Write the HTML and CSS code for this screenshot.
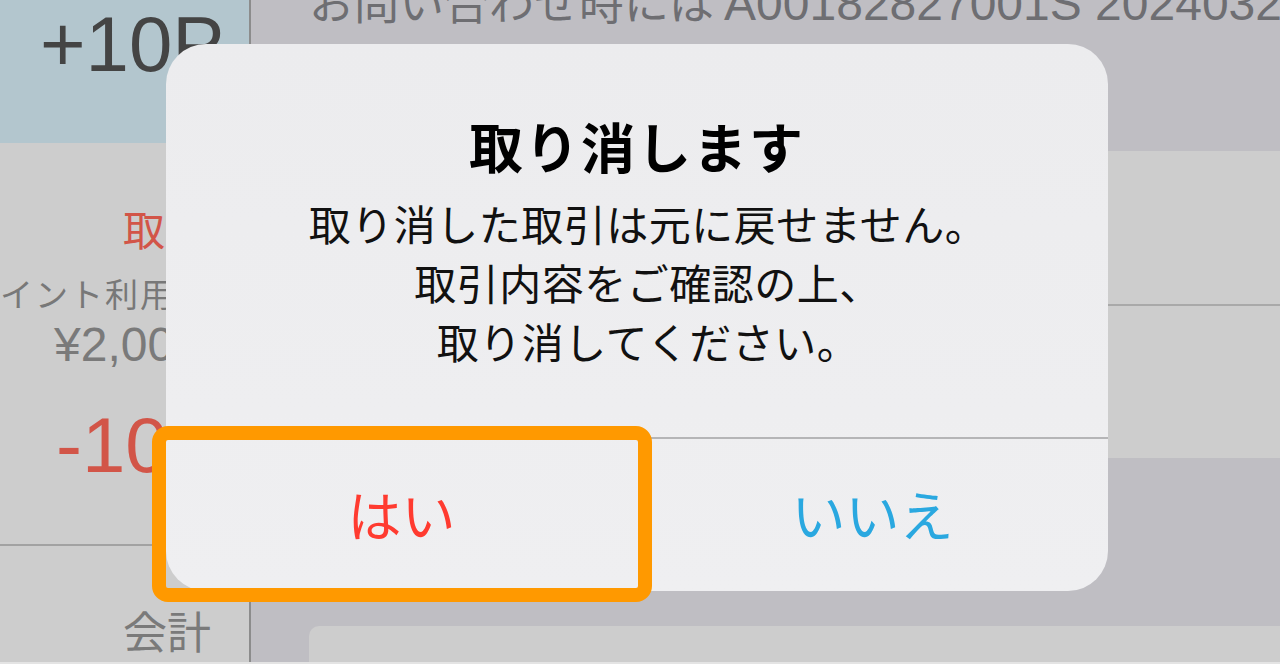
FILE: index.html
```html
<!DOCTYPE html>
<html lang="ja">
<head>
    <meta charset="UTF-8">
    <meta name="viewport" content="width=device-width, initial-scale=1.0">
    <title>取引詳細</title>
    <link rel="stylesheet" href="styles.css">
</head>
<body>
    <div class="screen">
        <aside class="side">
            <div class="side-top">
                <p class="point-plus">+10P</p>
            </div>
            <div class="side-detail">
                <p class="status">取消済み</p>
                <p class="caption">ポイント利用額</p>
                <p class="amount">¥2,000</p>
                <p class="point-minus">-10P</p>
            </div>
            <div class="side-total">
                <p class="total-label">会計</p>
            </div>
        </aside>
        <main class="content">
            <p class="inquiry">お問い合わせ時には <span class="inquiry-code">A00182827001S 20240321</span></p>
            <section class="card card-detail">
                <div class="card-row"></div>
                <div class="card-row"></div>
            </section>
            <section class="card card-bottom"></section>
        </main>
    </div>
    <div class="bottom-edge"></div>

    <div class="dialog">
        <h1 class="dialog-title">取り消します</h1>
        <p class="dialog-message">取り消した取引は元に戻せません。<br>取引内容をご確認の上、<br>取り消してください。</p>
        <div class="dialog-actions">
            <button class="dialog-btn btn-yes">はい</button>
            <button class="dialog-btn btn-no">いいえ</button>
        </div>
    </div>
    <div class="highlight"></div>
</body>
</html>
```

FILE: styles.css
```css
body {
    margin: 0;
    width: 1280px;
    height: 664px;
    overflow: hidden;
    font-family: "Noto Sans CJK JP", sans-serif;
    background: #bfbec3;
}

p {
    margin: 0;
}

.screen {
    display: flex;
    height: 662px;
    overflow: hidden;
}

/* left column */
.side {
    width: 249px;
    flex-shrink: 0;
    border-right: 2px solid #8c8c8c;
    background: #cdcdcd;
    overflow: hidden;
    white-space: nowrap;
}

.side-top {
    height: 143px;
    background: #b3c6ce;
}

.point-plus {
    padding-left: 40px;
    font-family: "Liberation Sans", sans-serif;
    font-size: 78px;
    line-height: 88px;
    color: #444444;
}

.side-detail {
    display: flow-root;
    height: 401px;
    border-bottom: 2px solid #a2a2a2;
}

.status {
    margin-top: 60px;
    padding-left: 123px;
    font-size: 42px;
    line-height: 50px;
    color: #d25548;
}

.caption {
    margin-top: 22px;
    margin-left: -35px;
    font-size: 33px;
    letter-spacing: 2px;
    line-height: 36px;
    color: #787878;
}

.amount {
    margin-top: 6px;
    padding-left: 54px;
    font-family: "Liberation Sans", sans-serif;
    font-size: 48px;
    line-height: 56px;
    color: #7a7a7a;
}

.point-minus {
    margin-top: 27px;
    padding-left: 56px;
    font-family: "Liberation Sans", sans-serif;
    font-size: 78px;
    line-height: 90px;
    color: #d25548;
}

.side-total {
    height: 116px;
}

.total-label {
    padding-top: 54px;
    padding-left: 123px;
    font-size: 44px;
    line-height: 60px;
    color: #7a7a7a;
}

/* right content */
.content {
    flex: 1;
    padding-left: 58px;
    background: #bfbec3;
}

.inquiry {
    margin-top: -29px;
    font-size: 45px;
    line-height: 60px;
    color: #6e6e72;
    white-space: nowrap;
}

.inquiry-code {
    font-family: "Liberation Sans", sans-serif;
    font-size: 48px;
}

.card {
    background: #cdcdcd;
    border-radius: 10px 0 0 10px;
}

.card-detail {
    margin-top: 117px;
}

.card-row {
    height: 153px;
}

.card-row + .card-row {
    height: 152px;
    border-top: 2px solid #a9a9a9;
}

.card-bottom {
    margin-top: 168px;
    height: 60px;
}

.bottom-edge {
    height: 2px;
    background: #e4e4e4;
}

/* alert */
.dialog {
    position: absolute;
    left: 166px;
    top: 44px;
    width: 942px;
    height: 547px;
    display: flex;
    flex-direction: column;
    border-radius: 40px;
    background: linear-gradient(#ececee, #efeff1);
    text-align: center;
    overflow: hidden;
}

.dialog-title {
    margin: 67px 0 0;
    font-size: 54px;
    font-weight: 700;
    letter-spacing: 2px;
    line-height: 70px;
    color: #000000;
}

.dialog-message {
    margin-top: 12px;
    padding-left: 22px;
    font-size: 42px;
    letter-spacing: 0.5px;
    line-height: 59px;
    color: #111111;
}

.dialog-actions {
    margin-top: auto;
    height: 152px;
    display: grid;
    grid-template-columns: 1fr 1fr;
    border-top: 2px solid #b5b5b7;
}

.dialog-btn {
    display: flex;
    align-items: center;
    justify-content: center;
    padding: 0 0 4px;
    border: none;
    background: transparent;
    font-family: "Noto Sans CJK JP", sans-serif;
    font-size: 54px;
}

.btn-yes {
    color: #ff3b30;
}

.btn-no {
    color: #2aa8e0;
}

.highlight {
    position: absolute;
    left: 152px;
    top: 426px;
    width: 500px;
    height: 176px;
    box-sizing: border-box;
    border: 14px solid #ff9900;
    border-radius: 16px;
}
```
